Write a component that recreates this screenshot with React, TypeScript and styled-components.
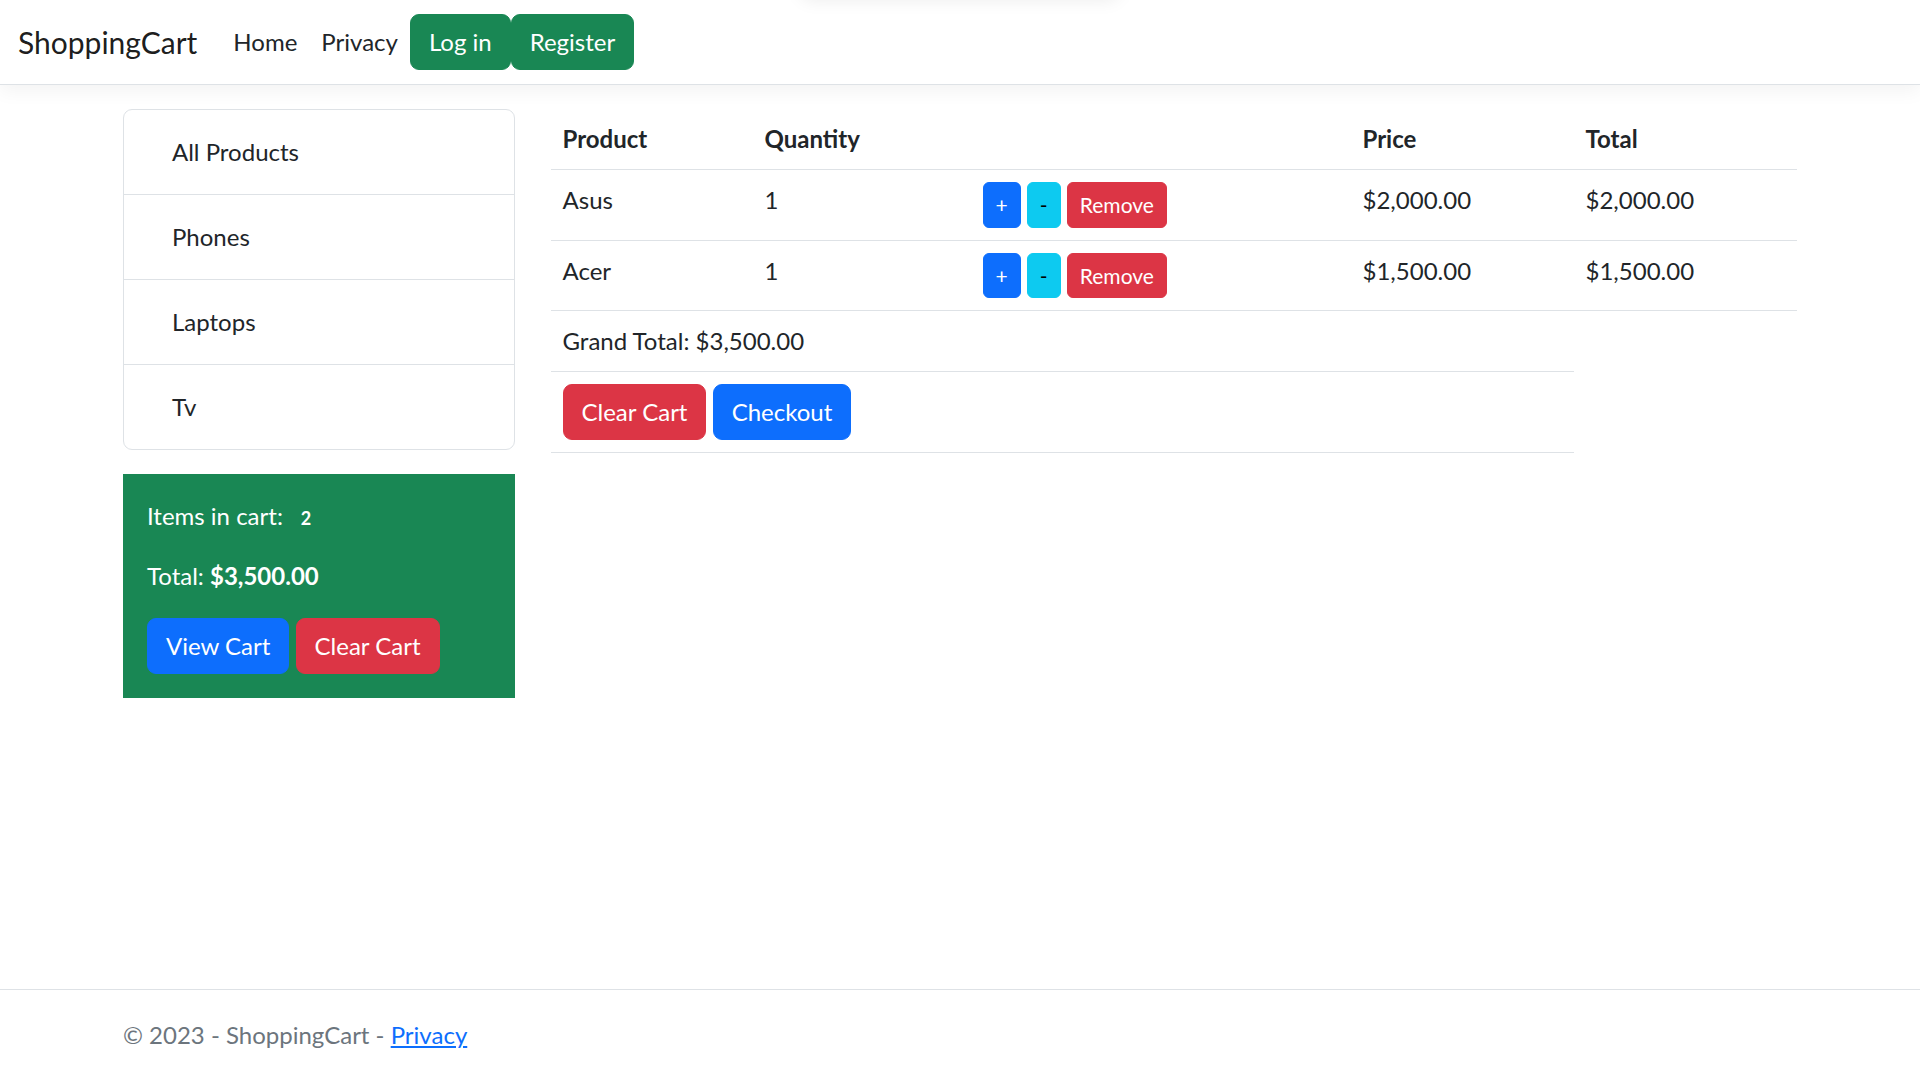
import React from "react";
import styled, { createGlobalStyle, css } from "styled-components";

const GlobalStyle = createGlobalStyle`
  html, body { margin: 0; padding: 0; }
  body {
    font-family: "Segoe UI", Lato, "Liberation Sans", sans-serif;
    font-size: 24px;
    line-height: 1.5;
    color: #212529;
    background: #fff;
  }
  *, *::before, *::after { box-sizing: border-box; }
`;

const Page = styled.div`
  min-height: 100vh;
  display: flex;
  flex-direction: column;
  position: relative;
  overflow: hidden;
`;

const TopShadow = styled.div`
  position: absolute;
  top: -40px;
  left: 800px;
  width: 320px;
  height: 40px;
  border-radius: 12px;
  box-shadow: 0 0 18px rgba(0, 0, 0, 0.08);
`;

const NavBar = styled.nav`
  display: flex;
  align-items: center;
  padding: 12px 18px;
  background: #fff;
  border-bottom: 1px solid #dee2e6;
  box-shadow: 0 6px 18px rgba(0, 0, 0, 0.05);
  margin-bottom: 24px;
`;

const Brand = styled.a`
  font-size: 30px;
  line-height: 1.5;
  padding: 7.5px 0;
  margin-right: 24px;
  color: rgba(0, 0, 0, 0.9);
  text-decoration: none;
`;

const NavLink = styled.a`
  display: block;
  padding: 12px;
  color: #212529;
  text-decoration: none;
`;

const variants = {
  success: css`background: #198754; border-color: #198754; color: #fff;`,
  primary: css`background: #0d6efd; border-color: #0d6efd; color: #fff;`,
  danger: css`background: #dc3545; border-color: #dc3545; color: #fff;`,
  info: css`background: #0dcaf0; border-color: #0dcaf0; color: #000;`,
};

const Button = styled.button<{ $variant: keyof typeof variants; $small?: boolean }>`
  display: inline-block;
  font-family: inherit;
  font-weight: 400;
  border: 1px solid transparent;
  cursor: pointer;
  vertical-align: middle;
  ${(p) =>
    p.$small
      ? css`
          font-size: 21px;
          line-height: 1.5;
          padding: 6px 12px;
          border-radius: 6px;
        `
      : css`
          font-size: 24px;
          line-height: 1.5;
          padding: 9px 18px;
          border-radius: 9px;
        `}
  ${(p) => variants[p.$variant]}
`;

const Container = styled.div`
  width: 1710px;
  margin: 0 auto;
  padding: 0 18px;
`;

const Main = styled.main`
  flex: 1;
  padding-bottom: 24px;
`;

const Row = styled.div`
  display: grid;
  grid-template-columns: 391.5px 1fr;
  column-gap: 36px;
  align-items: start;
`;

const Sidebar = styled.aside`
  display: flex;
  flex-direction: column;
`;

const CategoryList = styled.ul`
  list-style: none;
  margin: 0;
  padding: 0;
  border: 1px solid #dee2e6;
  border-radius: 9px;
  overflow: hidden;
`;

const CategoryItem = styled.li`
  padding: 24px 48px;
  & + & { border-top: 1px solid #dee2e6; }
`;

const CartSummary = styled.div`
  margin-top: 24px;
  padding: 24px;
  background: #198754;
  color: #fff;
`;

const SummaryLine = styled.p`
  margin: 0 0 24px;
`;

const Badge = styled.span`
  display: inline-block;
  font-size: 18px;
  font-weight: 700;
  line-height: 1;
  padding: 6.3px 11.7px;
`;

const Table = styled.table`
  width: 100%;
  border-collapse: collapse;
  table-layout: fixed;
  vertical-align: top;
`;

const Th = styled.th`
  text-align: left;
  font-weight: 700;
  padding: 12px;
  border-bottom: 1px solid #dee2e6;
`;

const Td = styled.td`
  padding: 12px;
  border-bottom: 1px solid #dee2e6;
  vertical-align: top;
`;

const Footer = styled.footer`
  border-top: 1px solid #dee2e6;
  color: #6c757d;
  line-height: 90px;
  white-space: nowrap;
`;

const FooterLink = styled.a`
  color: #0d6efd;
  text-decoration: underline;
`;

const items = [
  { name: "Asus", qty: 1, price: "$2,000.00", total: "$2,000.00" },
  { name: "Acer", qty: 1, price: "$1,500.00", total: "$1,500.00" },
];

export default function App() {
  return (
    <Page>
      <GlobalStyle />
      <TopShadow />
      <header>
        <NavBar>
          <Brand href="#">ShoppingCart</Brand>
          <NavLink href="#">Home</NavLink>
          <NavLink href="#">Privacy</NavLink>
          <Button $variant="success">Log in</Button>
          <Button $variant="success">Register</Button>
        </NavBar>
      </header>
      <Main>
        <Container>
          <Row>
            <Sidebar>
              <CategoryList>
                <CategoryItem>All Products</CategoryItem>
                <CategoryItem>Phones</CategoryItem>
                <CategoryItem>Laptops</CategoryItem>
                <CategoryItem>Tv</CategoryItem>
              </CategoryList>
              <CartSummary>
                <SummaryLine>
                  Items in cart: <Badge>2</Badge>
                </SummaryLine>
                <SummaryLine>
                  Total: <strong>$3,500.00</strong>
                </SummaryLine>
                <div>
                  <Button $variant="primary">View Cart</Button>{" "}
                  <Button $variant="danger">Clear Cart</Button>
                </div>
              </CartSummary>
            </Sidebar>
            <section>
              <Table>
                <colgroup>
                  <col style={{ width: 202 }} />
                  <col style={{ width: 218 }} />
                  <col style={{ width: 380 }} />
                  <col style={{ width: 223 }} />
                  <col />
                </colgroup>
                <thead>
                  <tr>
                    <Th>Product</Th>
                    <Th>Quantity</Th>
                    <Th></Th>
                    <Th>Price</Th>
                    <Th>Total</Th>
                  </tr>
                </thead>
                <tbody>
                  {items.map((it) => (
                    <tr key={it.name}>
                      <Td>{it.name}</Td>
                      <Td>{it.qty}</Td>
                      <Td>
                        <Button $variant="primary" $small>+</Button>{" "}
                        <Button $variant="info" $small>-</Button>{" "}
                        <Button $variant="danger" $small>Remove</Button>
                      </Td>
                      <Td>{it.price}</Td>
                      <Td>{it.total}</Td>
                    </tr>
                  ))}
                  <tr>
                    <Td colSpan={4}>Grand Total: $3,500.00</Td>
                  </tr>
                  <tr>
                    <Td colSpan={4}>
                      <Button $variant="danger">Clear Cart</Button>{" "}
                      <Button $variant="primary">Checkout</Button>
                    </Td>
                  </tr>
                </tbody>
              </Table>
            </section>
          </Row>
        </Container>
      </Main>
      <Footer>
        <Container>
          © 2023 - ShoppingCart - <FooterLink href="#">Privacy</FooterLink>
        </Container>
      </Footer>
    </Page>
  );
}
